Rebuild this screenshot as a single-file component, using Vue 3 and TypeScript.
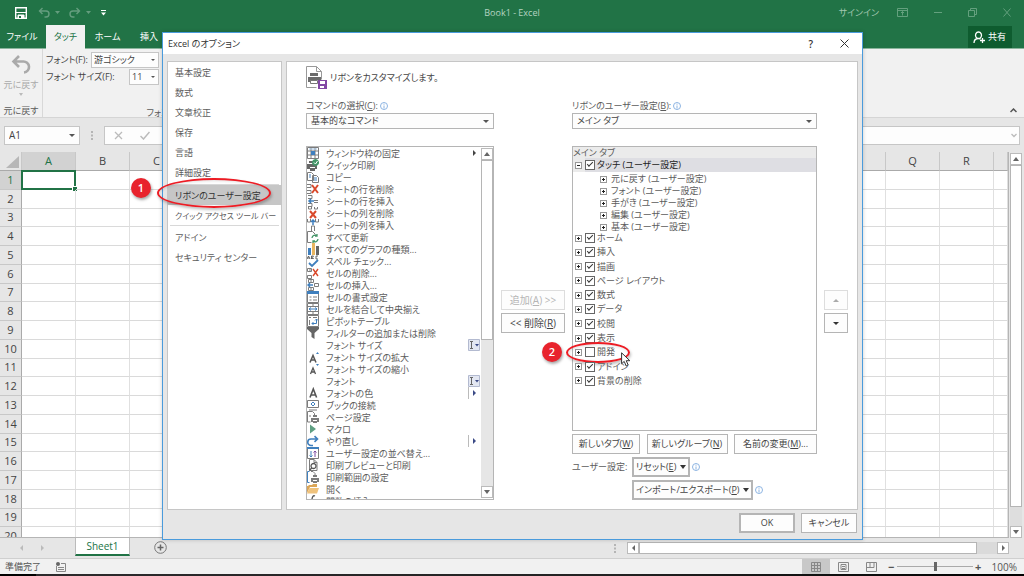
<script setup lang="ts">
import { ref } from 'vue'

interface Shape { d: string; f?: string; s?: string; w?: number }
interface Command { label: string; icon: Shape[]; tail?: 'arrow' | 'split' | 'combo' }
interface RibbonTab { label: string; on: boolean; marked?: boolean }

const G = '#7c7c7c'
const B = '#3f7fbd'
const R = '#d9492b'
const line = (d: string, s = G, w = 1): Shape => ({ d, s, w })
const fill = (d: string, f = G): Shape => ({ d, f })

const page = line('M2.5 .5H7l3 3v8H2.5zM7 .5v3h3')

const commands: Command[] = [
  { label: 'ウィンドウ枠の固定', tail: 'arrow', icon: [line('M.5 .5h11v11H.5zM.5 4h11M.5 8h11M4 .5v11M8 .5v11'), fill('M4 4h4v4H4z', B), line('M2 2h8', '#9fc0e0')] },
  { label: 'クイック印刷', icon: [fill('M0 5h10v5H8V8H3v2H0zM2 2h5v2H2zM3 9h5v3H3z', '#666'), fill('M8.500 0a3.500 3.500 0 1 0 .01 0z', '#439467'), line('M7 3.500l1.500 1.500 2-3', '#fff')] },
  { label: 'コピー', icon: [line('M.5 1.500h4l2 2v6h-6z'), line('M5.500 4.500h4l2 2v5h-6z'), line('M2 4h2M2 6h2M7 7h3M7 9h3', B)] },
  { label: 'シートの行を削除', icon: [line('M0 1.500h4v3H0M0 7.500h4v3H0'), line('M5 2l6 8M11 2l-6 8', R, 2)] },
  { label: 'シートの行を挿入', icon: [line('M1 .5h4v3H1M1 8.500h4v3H1'), line('M2 6h5M4 4L2 6l2 2', B, 1.500), line('M7 5.500h4M7 7.500h4')] },
  { label: 'シートの列を削除', icon: [line('M1.500 0v2h3V0M7.500 0v2h3V0'), line('M3 4l6 7M9 4l-6 7', R, 2)] },
  { label: 'シートの列を挿入', icon: [line('M.5 0v3h3V0M8.500 0v3h3V0M4.500 12V7h3v5'), line('M6 6V1M4 3l2-2 2 2', B, 1.500)] },
  { label: 'すべて更新', icon: [line('M.5 .5h5l3 3M.5 .5v11h4'), line('M5 7a3 3 0 0 1 5-2M11 8a3 3 0 0 1-5 2M10 3v2H8M6 12v-2h2', '#439467', 1.300)] },
  { label: 'すべてのグラフの種類...', icon: [fill('M1 5h3v7H1z', B), fill('M5 0h3v12H5z', '#e9b661'), fill('M9 3h3v9H9z', '#666')] },
  { label: 'スペル チェック...', icon: [line('M0 4l1.500-3L3 4M.5 3h2M4.500 1v3M4.500 1h2l-1 1.300 1 1.200h-2M11 1H9v3h2', '#444', .8), line('M2 8l3 3 6-6', B, 1.800)] },
  { label: 'セルの削除...', icon: [line('M.5 1.500h4v3h-4zM.5 8.500h4v3h-4zM4 3H2'), line('M6 2l5 7M11 2L6 9', R, 1.400)] },
  { label: 'セルの挿入...', icon: [line('M1.500 .5h5v3h-5zM4 .5v3M1.500 8.500h5v3h-5zM4 8.500v3M7.500 4.500h4v3h-4z'), line('M1 6h5M3 4L1 6l2 2', B, 1.400)] },
  { label: 'セルの書式設定', icon: [line('M.5 .5h11v11H.5z'), fill('M0 0h12v3H0z', B), line('M2.500 6h2M6 6h4M2.500 9h2M6 9h4')] },
  { label: 'セルを結合して中央揃え', icon: [line('M.5 .5h11v11H.5zM.5 3.500h11M.5 8.500h11M6 .5v3M6 8.500v3'), line('M2 6h8M4 4.500L2 6l2 1.500M8 4.500L10 6 8 7.500', B)] },
  { label: 'ピボットテーブル', icon: [line('M.5 .5h11v11H.5zM2 2.500h2M6 2.500h4M2.500 5v5'), line('M5 8.500h4.500V4M8 5.500L9.500 4 11 5.500M6.500 7L5 8.500 6.500 10', B)] },
  { label: 'フィルターの追加または削除', icon: [fill('M0 0h12v2L7.500 6v6l-3-2V6L0 2z', '#666')] },
  { label: 'フォント サイズ', tail: 'combo', icon: [] },
  { label: 'フォント サイズの拡大', icon: [line('M3 11.500l3-7 3 7M4 9h4', '#555', 1.500), fill('M9 3l1.500-2L12 3z', B)] },
  { label: 'フォント サイズの縮小', icon: [line('M3.500 11l2.500-6 2.500 6M4.500 9h3', '#555', 1.300), fill('M9 1h3l-1.500 2z', B)] },
  { label: 'フォント', tail: 'combo', icon: [] },
  { label: 'フォントの色', tail: 'split', icon: [line('M3 10.500l3.300-8.500 3.300 8.500M4 8h4.500', '#555', 1.600)] },
  { label: 'ブックの接続', icon: [line('M.5 1.500h11v7H.5zM2 11h8'), line('M6 3l2 2-2 2-2-2z', B)] },
  { label: 'ページ設定', icon: [line('M.5 11V.5h5l2 2V5M.5 11h3M2 5h2'), fill('M4 7h8v4h-2V9H6v2H4zM6 4h4v2H6zM6 10h4v2H6z')] },
  { label: 'マクロ', icon: [fill('M3 1.500l6 4.500-6 4.500z', '#5f9f82')] },
  { label: 'やり直し', tail: 'split', icon: [line('M6 10.500H4a3.200 3.200 0 0 1 0-6.500h6M7.500 1.200L10.500 4l-3 2.800', B, 1.600)] },
  { label: 'ユーザー設定の並べ替え...', icon: [line('M.5 .5h11v11H.5z'), fill('M0 0h12v2H0z', B), line('M4 4v6M2.500 8.500L4 10l1.500-1.500', B), line('M8 10V4M6.500 5.500L8 4l1.500 1.500', '#7b4ba0')] },
  { label: '印刷プレビューと印刷', icon: [page, { d: 'M6.500 4.500a2.500 2.500 0 1 0 .01 0zM4.700 8.800L2.500 11.500', s: '#555', w: 1.300 }] },
  { label: '印刷範囲の設定', icon: [line('M2.500 .5H.5v11h2', B), line('M4 .5h2l2 2V4'), fill('M4 7h8v4h-2V9H6v2H4zM6 4h4v2H6zM6 10h4v2H6z')] },
  { label: '開く', icon: [fill('M0 3h1l1-1h3l1-1h4v3H3L0 10z', '#dba555'), fill('M2.500 5H12l-2 5.500H0z', '#efc27c')] },
  { label: '関数の挿入', icon: [line('M8 1c-2-1-2.500 1-3 3l-1.500 7M3 5h4', '#555', 1.300)] },
]

const navTop = ['基本設定', '数式', '文章校正', '保存', '言語', '詳細設定']
const navBottom = ['アドイン', 'セキュリティ センター']
const touchGroups = ['元に戻す', 'フォント', '手がき', '編集', '基本']
const tabs = ref<RibbonTab[]>([
  { label: 'ホーム', on: true },
  { label: '挿入', on: true },
  { label: '描画', on: true },
  { label: 'ページ レイアウト', on: true },
  { label: '数式', on: true },
  { label: 'データ', on: true },
  { label: '校閲', on: true },
  { label: '表示', on: true },
  { label: '開発', on: false, marked: true },
  { label: 'アドイン', on: true },
  { label: '背景の削除', on: true },
])
const touchOn = ref(true)
const columns = 'ABCDEFGHIJKLMNOPQR'.split('')
</script>

<template>
  <div class="app">
    <header class="titlebar">
      <div class="quick">
        <button aria-label="上書き保存"><svg width="12" height="12" viewBox="0 0 12 12"><path d="M.7 .7h10.600v10.600H.7z" fill="none" stroke="#fff" stroke-width="1.400" /><path d="M1 5.500h10M3 8h6v3.500H3z" fill="#fff" stroke="#fff" /><path d="M4 9h2v2H4z" fill="#217346" /></svg></button>
        <button class="faded" aria-label="元に戻す"><svg width="12" height="11" viewBox="0 0 12 11"><path d="M4.500 1L1.500 4l3 3M1.500 4H8a3 3 0 0 1 0 6H6.500" fill="none" stroke="#fff" stroke-width="1.400" /></svg></button>
        <svg class="faded" width="5" height="3" viewBox="0 0 5 3"><path d="M0 0h5L2.500 3z" fill="#fff" /></svg>
        <button class="faded" aria-label="やり直し"><svg width="12" height="11" viewBox="0 0 12 11"><path d="M7.500 1l3 3-3 3M10.500 4H4a3 3 0 0 0 0 6h1.500" fill="none" stroke="#fff" stroke-width="1.400" /></svg></button>
        <svg class="faded" width="5" height="3" viewBox="0 0 5 3"><path d="M0 0h5L2.500 3z" fill="#fff" /></svg>
        <button class="custom" aria-label="カスタマイズ"><svg width="5" height="6" viewBox="0 0 5 6"><path d="M0 0h5v1H0zM0 2.500h5L2.500 5.500z" fill="#fff" /></svg></button>
      </div>
      <span class="doc">Book1 - Excel</span>
      <div class="window-tools">
        <a href="#">サインイン</a>
        <button aria-label="リボンの表示オプション"><svg width="11" height="9" viewBox="0 0 11 9"><path d="M.5 .5h10v8H.5zM.5 2.500h10M5.500 7.500v-4M4 5l1.500-1.500L7 5" /></svg></button>
        <button aria-label="最小化"><svg width="8" height="9" viewBox="0 0 8 9"><path d="M0 4.500h8" /></svg></button>
        <button aria-label="元のサイズに戻す"><svg width="9" height="9" viewBox="0 0 9 9"><path d="M.5 2.500h6v6h-6zM2.500 2.500v-2h6v6h-2" /></svg></button>
        <button aria-label="閉じる"><svg width="8" height="9" viewBox="0 0 8 9"><path d="M.5 .5l7 8M7.500 .5l-7 8" /></svg></button>
      </div>
    </header>

    <nav class="ribbon-tabs">
      <button class="file">ファイル</button>
      <button class="current">タッチ</button>
      <button class="home">ホーム</button>
      <button>挿入</button>
      <button class="share"><svg width="13" height="13" viewBox="0 0 13 13"><path d="M5.500 1a3 3.300 0 1 0 .01 0zM1 12c0-3 2-4.500 4.500-4.500 1 0 1.500.2 2 .5M9.500 7v5M7 9.500h5" fill="none" stroke="#fff" stroke-width="1.300" /></svg>共有</button>
    </nav>

    <section class="ribbon">
      <div class="undo-group">
        <svg width="20" height="19" viewBox="0 0 20 19"><path d="M8 1L2.500 6.500 8 12M3 6.500h9a5.500 5.500 0 0 1 1 11" fill="none" stroke="#aaa" stroke-width="2.600" /></svg>
        <span class="dim">元に戻す</span>
        <svg width="4" height="3" viewBox="0 0 4 3"><path d="M0 0h4L2 3z" fill="#bbb" /></svg>
        <span class="group-name">元に戻す</span>
      </div>
      <div class="font-group">
        <div class="font-row"><label for="face">フォント(F):</label><span class="pick face"><select id="face"><option>游ゴシック</option></select><i></i></span></div>
        <div class="font-row"><label for="size">フォント サイズ(F):</label><span class="pick size"><select id="size"><option>11</option></select><i></i></span></div>
        <span class="group-name">フォント</span>
      </div>
      <button class="collapse" aria-label="リボンを折りたたむ"><svg width="7" height="5" viewBox="0 0 7 5"><path d="M.5 4l3-3 3 3" fill="none" stroke="#555" stroke-width="1.500" /></svg></button>
    </section>

    <section class="formula">
      <span class="pick name"><select aria-label="名前ボックス"><option>A1</option></select><i></i></span>
      <svg width="2" height="9" viewBox="0 0 2 9"><path d="M0 0h2v2H0zM0 3.500h2v2H0zM0 7h2v2H0z" fill="#b5b5b5" /></svg>
      <div class="entry">
        <svg width="9" height="9" viewBox="0 0 9 9"><path d="M1 1l7 7M8 1L1 8" /></svg>
        <svg width="10" height="9" viewBox="0 0 10 9"><path d="M.5 5L3.500 8 9.500 1" stroke-width="1.500" /></svg>
        <input aria-label="数式バー">
        <svg width="6" height="5" viewBox="0 0 6 5"><path d="M.5 1L3 3.500 5.500 1" /></svg>
      </div>
    </section>

    <main class="sheet">
      <div class="cells">
        <table>
          <colgroup><col class="rowhead"><col v-for="c in columns" :key="c" class="col"><col></colgroup>
          <thead><tr><th class="corner"><svg width="13" height="12" viewBox="0 0 13 12"><path d="M13 0v12H0z" fill="#b7b7b7" /></svg></th><th v-for="c in columns" :key="c" :class="{ active: c === 'A' }">{{ c }}</th><th></th></tr></thead>
          <tbody><tr v-for="n in 20" :key="n"><th :class="{ active: n === 1 }">{{ n }}</th><td v-for="c in columns" :key="c"><span v-if="n === 1 && c === 'A'" class="cursor-cell"></span></td><td></td></tr></tbody>
        </table>
      </div>
      <div class="vscroll">
        <button aria-label="上へ"><svg width="6" height="4" viewBox="0 0 6 4"><path d="M0 4h6L3 0z" /></svg></button>
        <div class="thumb"></div>
        <button aria-label="下へ"><svg width="6" height="4" viewBox="0 0 6 4"><path d="M0 0h6L3 4z" /></svg></button>
      </div>
    </main>

    <footer class="sheetbar">
      <div class="steps"><svg width="3" height="6" viewBox="0 0 3 6"><path d="M3 0v6L0 3z" /></svg><svg width="3" height="6" viewBox="0 0 3 6"><path d="M0 0v6l3-3z" /></svg></div>
      <button class="sheet-tab">Sheet1</button>
      <button class="add-sheet" aria-label="新しいシート"><svg width="13" height="13" viewBox="0 0 13 13"><circle cx="6.500" cy="6.500" r="5.800" fill="none" stroke="#777" /><path d="M6.500 3.500v6M3.500 6.500h6" stroke="#666" stroke-width="1.500" /></svg></button>
      <div class="hscroll">
        <svg width="2" height="9" viewBox="0 0 2 9"><path d="M0 0h2v2H0zM0 3.500h2v2H0zM0 7h2v2H0z" fill="#b5b5b5" /></svg>
        <div class="bar">
          <button aria-label="左へ"><svg width="3" height="6" viewBox="0 0 3 6"><path d="M3 0v6L0 3z" /></svg></button>
          <div class="thumb"></div>
          <button aria-label="右へ"><svg width="3" height="6" viewBox="0 0 3 6"><path d="M0 0v6l3-3z" /></svg></button>
        </div>
      </div>
    </footer>

    <footer class="status">
      <span>準備完了</span>
      <svg width="10" height="10" viewBox="0 0 10 10"><path d="M.5 4v5.500h9v-8H5M2 5.500h6M2 7.500h6" fill="none" stroke="#888" /><circle cx="2" cy="2" r="2" fill="#666" /></svg>
      <div class="views">
        <button class="on" aria-label="標準"><svg width="10" height="10" viewBox="0 0 10 10"><path d="M.5 .5h9v9h-9zM3.500 .5v9M6.500 .5v9M.5 3.500h9M.5 6.500h9" /></svg></button>
        <button aria-label="ページ レイアウト"><svg width="11" height="10" viewBox="0 0 11 10"><path d="M.5 .5h10v9H.5zM3 2.500h5v5H3zM4 4.500h3M4 6.500h3" /></svg></button>
        <button aria-label="改ページ プレビュー"><svg width="11" height="10" viewBox="0 0 11 10"><path d="M.5 .5h10v9H.5zM4 .5v5h4v-5M.5 5.500H4" /></svg></button>
      </div>
      <div class="zoom"><b>−</b><input type="range" aria-label="ズーム" min="10" max="160" value="86"><b>+</b><span>100%</span></div>
    </footer>
    <div class="edge"></div>

    <div class="layer">
      <section class="dialog" role="dialog" aria-label="Excel のオプション">
        <header class="dialog-title">
          <span>Excel のオプション</span>
          <button aria-label="ヘルプ">?</button>
          <button aria-label="閉じる"><svg width="9" height="9" viewBox="0 0 9 9"><path d="M.5 .5l8 8M8.500 .5l-8 8" stroke="#333" /></svg></button>
        </header>
        <div class="dialog-body">
          <nav class="side">
            <button v-for="n in navTop" :key="n">{{ n }}</button>
            <hr class="above">
            <div class="picked">
              <button>リボンのユーザー設定</button>
              <span class="ring nav-ring"></span>
              <span class="badge nav-badge">1</span>
            </div>
            <button class="long">クイック アクセス ツール バー</button>
            <hr class="below">
            <button v-for="n in navBottom" :key="n">{{ n }}</button>
          </nav>
          <div class="panel">
            <h1>
              <svg width="21" height="24" viewBox="0 0 21 24"><path d="M.5 21.500V.5h10l5 5v8M10.500 .5v5h5M.5 21.500h10" fill="none" stroke="#999" /><path d="M2 11h13v5h-3v-2H5v2H2zM4 7h8v3H4z" fill="#6c6c6c" /><path d="M4.500 14.500h7v3h-7z" fill="#fff" stroke="#777" /><path d="M12 14h9v9h-9z" fill="#8248a5" /><path d="M14 15h5v3h-5zM14 20h4v2h-4z" fill="#fff" /></svg>
              <span>リボンをカスタマイズします。</span>
            </h1>
            <div class="layout">
              <div class="column">
                <div class="caption"><label for="source">コマンドの選択(<u>C</u>):</label><svg class="info" width="8" height="8" viewBox="0 0 8 8"><circle cx="4" cy="4" r="3.500" /><path d="M4 1.700v1M4 3.500v3" /></svg></div>
                <span class="pick wide"><select id="source"><option>基本的なコマンド</option></select><i></i></span>
                <div class="commands">
                  <ul>
                    <li v-for="c in commands" :key="c.label">
                      <svg width="12" height="12" viewBox="0 0 12 12"><path v-for="(p, i) in c.icon" :key="i" :d="p.d" :fill="p.f ?? 'none'" :stroke="p.s ?? 'none'" :stroke-width="p.w ?? 1" /></svg>
                      <span>{{ c.label }}</span>
                      <svg v-if="c.tail === 'arrow'" class="tail" width="8" height="8" viewBox="0 0 8 8"><path d="M3 1l3 3-3 3z" fill="#444" /></svg>
                      <svg v-else-if="c.tail === 'split'" class="tail" width="10" height="12" viewBox="0 0 10 12"><path d="M.5 0v12" stroke="#bbb" /><path d="M5 3l3 3-3 3z" fill="#3b4a86" /></svg>
                      <svg v-else-if="c.tail === 'combo'" class="tail" width="12" height="12" viewBox="0 0 12 12"><path d="M.5 .5h11v11H.5z" fill="#e3e7f2" stroke="#b3bad0" /><path d="M2 2.500h3M2 9.500h3M3.500 2.500v7" stroke="#666" /><path d="M7 5h4L9 7.500z" fill="#3b4a86" /></svg>
                    </li>
                  </ul>
                  <div class="vscroll inner">
                    <button aria-label="上へ"><svg width="6" height="4" viewBox="0 0 6 4"><path d="M0 4h6L3 0z" /></svg></button>
                    <div class="thumb"></div>
                    <button aria-label="下へ"><svg width="6" height="4" viewBox="0 0 6 4"><path d="M0 0h6L3 4z" /></svg></button>
                  </div>
                </div>
              </div>
              <div class="transfer">
                <button class="btn" disabled>追加(<u>A</u>) &gt;&gt;</button>
                <button class="btn">&lt;&lt; 削除(<u>R</u>)</button>
              </div>
              <div class="column">
                <div class="caption"><label for="target">リボンのユーザー設定(<u>B</u>):</label><svg class="info" width="8" height="8" viewBox="0 0 8 8"><circle cx="4" cy="4" r="3.500" /><path d="M4 1.700v1M4 3.500v3" /></svg></div>
                <span class="pick wide"><select id="target"><option>メイン タブ</option></select><i></i></span>
                <div class="tree">
                  <div class="tree-head">メイン タブ</div>
                  <div class="branch touch"><button class="fold open" aria-label="折りたたむ"></button><label><input v-model="touchOn" type="checkbox">タッチ (ユーザー設定)</label></div>
                  <div class="groups">
                    <div v-for="g in touchGroups" :key="g"><button class="fold" aria-label="展開"></button>{{ g }} (ユーザー設定)</div>
                  </div>
                  <div class="tabs">
                    <div v-for="t in tabs" :key="t.label" class="branch">
                      <button class="fold" aria-label="展開"></button><label><input v-model="t.on" type="checkbox">{{ t.label }}</label>
                      <template v-if="t.marked">
                        <span class="ring tree-ring"></span>
                        <span class="badge tree-badge">2</span>
                        <svg class="pointer" width="10" height="15" viewBox="0 0 10 15"><path d="M.6 .8v11l2.600-2.400 2 4.600 2-1-2-4.300h3.600z" fill="#fff" stroke="#333" /></svg>
                      </template>
                    </div>
                  </div>
                </div>
                <div class="tree-actions">
                  <button class="btn new-tab">新しいタブ(<u>W</u>)</button>
                  <button class="btn new-group">新しいグループ(<u>N</u>)</button>
                  <button class="btn rename">名前の変更(<u>M</u>)...</button>
                </div>
                <div class="custom-actions">
                  <span>ユーザー設定:</span>
                  <div><button class="btn strong">リセット(<u>E</u>)<i></i></button><svg class="info" width="8" height="8" viewBox="0 0 8 8"><circle cx="4" cy="4" r="3.500" /><path d="M4 1.700v1M4 3.500v3" /></svg></div>
                  <div class="second"><button class="btn strong">インポート/エクスポート(<u>P</u>)<i></i></button><svg class="info" width="8" height="8" viewBox="0 0 8 8"><circle cx="4" cy="4" r="3.500" /><path d="M4 1.700v1M4 3.500v3" /></svg></div>
                </div>
              </div>
              <div class="transfer order">
                <button class="btn" disabled aria-label="上へ"><svg width="6" height="3" viewBox="0 0 6 3"><path d="M0 3h6L3 0z" fill="#aaa" /></svg></button>
                <button class="btn" aria-label="下へ"><svg width="6" height="3" viewBox="0 0 6 3"><path d="M0 0h6L3 3z" fill="#333" /></svg></button>
              </div>
            </div>
          </div>
        </div>
        <footer class="dialog-foot">
          <button class="btn strong">OK</button>
          <button class="btn">キャンセル</button>
        </footer>
      </section>
    </div>
  </div>
</template>

<style>
html, body { margin: 0; height: 100%; }
#app { height: 100%; }
</style>

<style scoped>
.app {
  position: relative;
  display: flex;
  flex-direction: column;
  height: 100vh;
  overflow: hidden;
  background: #e6e6e6;
  color: #5c5c5c;
  font: 9px/12px "Open Sans", "Noto Sans CJK JP", sans-serif;
  font-feature-settings: "palt";
  white-space: nowrap;
}
.app *, .app *::before, .app *::after { box-sizing: border-box; }
button, select, input { font: inherit; font-feature-settings: inherit; color: inherit; margin: 0; padding: 0; border: 0; background: none; }
svg { display: block; flex: none; }
a { color: inherit; text-decoration: none; }
u { text-underline-offset: 1px; }

.titlebar { display: grid; grid-template-columns: 1fr auto 1fr; align-items: center; height: 25px; background: #217346; color: #b5d3c2; }
.quick { display: flex; align-items: center; gap: 5px; padding-left: 15px; }
.quick > button:nth-of-type(2) { margin-left: 6px; }
.quick > button:nth-of-type(3) { margin-left: 4px; }
.faded { opacity: .3; }
.custom { margin-left: 5px; }
.window-tools { display: flex; justify-content: flex-end; align-items: center; padding-right: 13px; color: #a2c7b1; }
.window-tools a { margin-right: 18px; }
.window-tools button { margin-left: 26px; }
.window-tools a + button { margin-left: 0; }
.window-tools svg { fill: none; stroke: #64a07e; }

.ribbon-tabs { display: flex; align-items: flex-end; height: 24px; background: #217346; border-bottom: 1px solid #8ab59c; color: #fff; }
.ribbon-tabs button { height: 23px; }
.ribbon-tabs .file { width: 44px; margin-right: 2px; }
.ribbon-tabs .current { width: 39px; height: 24px; margin-bottom: -1px; background: #f1f1f1; color: #217346; }
.ribbon-tabs .home { width: 45px; margin-right: 10px; }
.ribbon-tabs .share { display: flex; align-items: center; gap: 2px; height: 22px; margin-left: auto; margin-right: 12px; padding: 0 6px 0 5px; background: #0e5c2f; }

.ribbon { display: flex; height: 69px; background: #f1f1f1; border-bottom: 1px solid #d5d5d5; }
.undo-group { display: flex; flex-direction: column; align-items: center; width: 43px; padding-top: 6px; border-right: 1px solid #d8d8d8; margin: 0 3px 0 0; }
.undo-group .dim { margin: 5px 0 2px; color: #aaa; }
.font-group { display: flex; flex-direction: column; width: 130px; gap: 1px; padding-top: 3px; }
.font-row { display: flex; justify-content: space-between; align-items: center; height: 17px; margin-right: 17px; color: #444; }
.group-name { align-self: flex-end; margin-top: 21px; }
.undo-group .group-name { align-self: center; margin: 9px 0 0; }
.collapse { margin: auto 7px 4px auto; }

.pick { position: relative; display: flex; background: #fdfdfd; border: 1px solid #c6c6c6; color: #444; }
.pick select { appearance: none; width: 100%; height: 14px; padding: 0 14px 0 4px; line-height: 14px; }
.pick i { position: absolute; right: 4px; top: calc(50% - 1px); border: 3px solid transparent; border-top-color: #555; border-bottom: 0; }
.face { width: 68px; }
.face select, .size select { padding-left: 2px; }
.size { width: 30px; }
.face i, .size i { right: 3px; border-width: 2px; border-bottom: 0; }
.wide { flex: none; height: 16px; border-color: #b5b5b5; }

.formula { display: flex; align-items: center; gap: 11px; height: 34px; padding: 0 4px; }
.name { width: 76px; height: 19px; }
.name select { height: 17px; line-height: 17px; font-size: 10px; }
.entry { display: flex; align-items: center; flex: 1; height: 19px; padding: 0 2px 0 9px; gap: 17px; background: #fdfdfd; border: 1px solid #c6c6c6; }
.entry svg { fill: none; stroke: #bbb; stroke-width: 1.3; }
.entry input { flex: 1; min-width: 0; }

.sheet { display: flex; flex: 1; min-height: 0; }
.cells { flex: 1; min-width: 0; overflow: hidden; border-right: 1px solid #b5b5b5; border-bottom: 1px solid #b5b5b5; }
table { width: 100%; height: calc(100% + 9px); table-layout: fixed; border-collapse: separate; border-spacing: 0; background: #fff; font-size: 11px; line-height: 14px; }
.rowhead { width: 22px; }
.col { width: 54px; }
th, td { padding: 0; border-right: 1px solid #e0e0e0; border-bottom: 1px solid #dadada; }
th { background: #e6e6e6; font-weight: 400; color: #444; }
thead th { height: 19px; border-color: #c2c2c2 #c8c8c8; border-bottom-color: #aaa; }
tbody th { border-color: #aaa; border-bottom-color: #c8c8c8; }
th.active { background: #d2d2d2; color: #217346; }
.corner svg { margin: 2px 0 0 6px; }
tbody td { position: relative; }
.cursor-cell { position: absolute; inset: -1px -1px -1px -1px; border: 2px solid #217346; }
.cursor-cell::after { content: ""; position: absolute; right: -3px; bottom: -3px; width: 5px; height: 5px; background: #217346; border: 1px solid #fff; border-width: 1px 0 0 1px; }
.vscroll { display: flex; flex-direction: column; width: 12px; margin: 1px 2px 0 1px; background: #dedede; }
.vscroll button { display: grid; place-items: center; height: 12px; background: #fff; border: 1px solid #bbb; }
.vscroll svg, .hscroll button svg { fill: #666; }
.vscroll .thumb { flex: 343; background: #fff; border: 1px solid #b5b5b5; margin-bottom: 19px; }

.sheetbar { display: flex; height: 21px; border-bottom: 1px solid #cfcfcf; }
.steps { display: flex; justify-content: space-between; align-items: center; width: 75px; padding: 0 31px 0 20px; fill: #bbb; }
.sheet-tab { width: 55px; height: 18px; background: #fff; border-bottom: 2px solid #217346; border-left: 1px solid #bbb; border-right: 1px solid #bbb; color: #217346; font-size: 10px; }
.add-sheet { margin: 0 0 2px 24px; }
.hscroll { display: flex; align-items: center; gap: 11px; width: 395px; margin: 0 15px 0 auto; }
.bar { display: flex; flex: 1; height: 12px; background: #dadada; }
.bar button { display: grid; place-items: center; width: 12px; background: #fff; border: 1px solid #bbb; }
.bar .thumb { flex: 1; margin-right: 20px; background: #fff; border: 1px solid #b5b5b5; }

.status { display: flex; align-items: center; height: 15px; padding: 0 7px 0 5px; background: #f1f1f1; color: #555; }
.status > svg { margin-left: 15px; }
.views { display: flex; align-self: stretch; margin-left: auto; }
.views button { display: grid; place-items: center; width: 28px; }
.views .on { background: #c8c8c8; }
.views svg { fill: none; stroke: #888; }
.zoom { display: flex; align-items: center; font-size: 10px; }
.zoom b { width: 11px; text-align: center; font-size: 11px; }
.zoom span { margin-left: 8px; }
.zoom input { appearance: none; width: 76px; height: 12px; background: linear-gradient(#aaa, #aaa) center / 100% 1px no-repeat; }
.zoom input::-webkit-slider-thumb { appearance: none; width: 3px; height: 9px; background: #666; }
.edge { height: 2px; background: linear-gradient(90deg, #000 36px, #2c2a2c 36px, #222 60%, #000); }

.layer { position: absolute; inset: 0; display: flex; padding: 32px 161px 36px 162px; }
.dialog { display: flex; flex-direction: column; flex: 1; min-width: 0; background: #e6e6e6; border: 1px solid #4a9bdc; box-shadow: 0 0 4px rgba(0, 0, 0, .2); }
.dialog-title { display: flex; align-items: center; height: 21px; padding: 0 13px 0 5px; background: #fff; color: #333; }
.dialog-title span { margin-right: auto; }
.dialog-title button { margin-left: 27px; font-size: 10px; font-weight: 600; }
.dialog-body { display: flex; flex: 1; min-height: 0; gap: 4px; padding: 7px 4px 0; }
.side { display: flex; flex-direction: column; width: 115px; background: #fff; border: 1px solid #c6c6c6; }
.side button { flex: none; height: 20px; padding: 1px 0 0 7px; text-align: left; }
.side .long { font-size: 8px; }
.side hr { width: calc(100% - 4px); height: 1px; border: 0; background: #d8d8d8; }
.side .above { margin: 2px 2px 0; }
.side .below { margin: 0 2px 1px; }
.picked { position: relative; }
.picked > button { width: 100%; background: #c6c6c6; color: #333; }
.ring { position: absolute; border: 2px solid #ec1c24; border-radius: 50%; box-shadow: 1px 2px 3px rgba(0, 0, 0, .25), inset 1px 1px 3px rgba(0, 0, 0, .12); pointer-events: none; }
.badge { position: absolute; display: grid; place-items: center; width: 20px; height: 20px; border-radius: 50%; background: #e8232d; color: #fff; font-size: 11px; font-weight: 600; box-shadow: 1px 2px 3px rgba(0, 0, 0, .35); }
.nav-ring { left: -11px; top: -7px; width: 114px; height: 30px; }
.nav-badge { left: -37px; top: -7px; }
.panel { display: flex; flex-direction: column; flex: 1; min-width: 0; padding: 0 9px 9px 19px; background: #fff; border: 1px solid #c6c6c6; }
h1 { display: flex; align-items: center; gap: 3px; height: 32px; margin: 0 0 4px; font-size: 9px; font-weight: 400; color: #444; }
.layout { display: grid; grid-template-columns: 188fr 64px 245fr 24px; grid-template-rows: minmax(0, 1fr); gap: 7px; flex: 1; min-height: 0; }
.column { display: flex; flex-direction: column; min-width: 0; }
.caption { display: flex; align-items: center; gap: 2px; height: 15px; }
.info { fill: none; stroke: #8db4e2; }
.commands { display: flex; flex: 1; min-height: 0; margin-top: 17px; overflow: hidden; border: 1px solid #b5b5b5; }
.commands ul { flex: 1; min-width: 0; margin: 0; padding: 0; list-style: none; }
.commands li { display: flex; align-items: center; height: 12px; }
.commands li span { margin-left: 7px; padding-top: 1px; }
.tail { margin-left: auto; }
.tail[width="8"] { margin-right: 2px; }
.tail[width="10"] { margin-right: 2px; }
.inner { margin: 1px 0 1px 1px; width: 12px; background: #e6e6e6; }
.inner .thumb { flex: 180; margin-bottom: 146px; }
.btn { flex: none; display: flex; justify-content: center; align-items: center; height: 20px; white-space: pre; background: #fdfdfd; border: 1px solid #b5b5b5; color: #444; }
.btn:disabled { border-color: #ddd; color: #b5b5b5; }
.btn i { margin-left: 4px; border: 3px solid transparent; border-top: 4px solid #333; border-bottom: 0; }
.strong { border-width: 2px; border-color: #b5b5b5; }
.transfer { display: flex; flex-direction: column; gap: 3px; padding-top: 192px; }
.transfer .btn { font-size: 10px; }
.tree { flex: 1; min-height: 0; margin-top: 17px; border: 1px solid #b5b5b5; }
.tree-head { height: 11px; line-height: 12px; background: #ebebeb; }
.branch { position: relative; display: flex; align-items: center; gap: 3px; padding-left: 2px; }
.branch label { display: flex; align-items: center; gap: 2px; }
.touch { height: 14px; background: linear-gradient(90deg, #ebebeb 12px, #dedee3 12px); color: #222; }
.fold { position: relative; flex: none; width: 7px; height: 7px; border: 1px solid #999; background: linear-gradient(#222, #222) center / 3px 1px no-repeat, linear-gradient(#222, #222) center / 1px 3px no-repeat, #fff; }
.fold.open { background: linear-gradient(#222, #222) center / 3px 1px no-repeat, #fff; }
input[type="checkbox"] { appearance: none; position: relative; width: 10px; height: 10px; background: #fff; border: 1px solid #666; }
input[type="checkbox"]:checked::after { content: ""; position: absolute; left: 1px; top: 1px; width: 6px; height: 3px; border: solid #333; border-width: 0 0 1px 1px; transform: rotate(-45deg); }
.groups { padding: 1px 0 0 27px; margin-bottom: -2px; }
.groups div { display: flex; align-items: center; gap: 4px; height: 12px; }
.tabs { display: grid; grid-auto-rows: 1fr; height: 157px; }
.tree-ring { left: -7px; top: -3px; width: 64px; height: 21px; }
.tree-badge { left: -31px; top: -3px; }
.pointer { position: absolute; left: 48px; top: 7px; }
.tree-actions { display: flex; justify-content: space-between; margin-top: 3px; }
.new-tab { width: 68px; }
.new-group { width: 81px; }
.rename { width: 83px; }
.custom-actions { display: grid; grid-template-columns: 60px 1fr; row-gap: 3px; align-items: center; margin-top: 3px; }
.custom-actions div { display: flex; align-items: center; gap: 2px; }
.custom-actions .btn { padding: 0 2px; }
.custom-actions .second { grid-column: 2; }
.dialog-foot { display: flex; justify-content: flex-end; gap: 6px; height: 29px; padding: 3px 5px 0; }
.dialog-foot .btn { width: 56px; }
</style>
